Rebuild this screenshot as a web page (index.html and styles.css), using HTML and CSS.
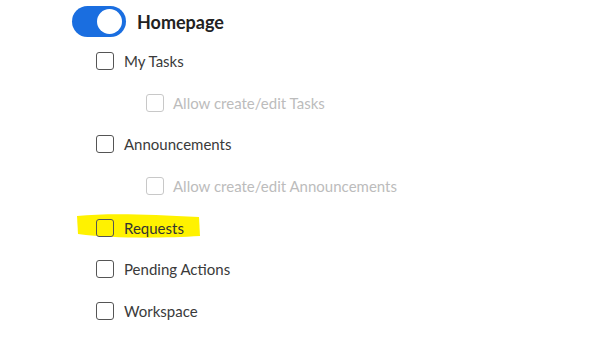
FILE: index.html
```html
<!DOCTYPE html>
<html lang="en">
  <head>
    <meta charset="UTF-8" />
    <meta name="viewport" content="width=device-width, initial-scale=1.0" />
    <title>Homepage permissions</title>
    <link rel="stylesheet" href="styles.css">
  </head>
  <body>
    <div class="panel">
      <div class="section-head">
        <span class="toggle on"><span class="knob"></span></span>
        <span class="section-title">Homepage</span>
      </div>
      <ul class="perm-list">
        <li class="perm"><span class="box"></span>My Tasks</li>
        <li class="perm sub disabled"><span class="box"></span>Allow create/edit Tasks</li>
        <li class="perm"><span class="box"></span>Announcements</li>
        <li class="perm sub disabled"><span class="box"></span>Allow create/edit Announcements</li>
        <li class="perm marked">
          <!-- highlighter stroke from the screenshot -->
          <svg class="marker" width="126" height="27" viewBox="0 0 126 27">
            <path d="M1 3 C30 0 70 1 123 4 L124 23 C90 25 40 26 2 21 Z" fill="#fff200" />
          </svg>
          <span class="box"></span>Requests
        </li>
        <li class="perm"><span class="box"></span>Pending Actions</li>
        <li class="perm"><span class="box"></span>Workspace</li>
      </ul>
    </div>
  </body>
</html>
```

FILE: styles.css
```css
body {
  margin: 0;
  background-color: #fff;
  font-family: Lato, "Liberation Sans", sans-serif;
  color: #333;
}

.panel {
  padding: 6px 0 0 72px;
}

.section-head {
  display: flex;
  align-items: center;
  height: 31px;
}

.toggle {
  width: 54px;
  height: 31px;
  border-radius: 16px;
  background-color: #1a6ee0;
  display: flex;
  align-items: center;
  justify-content: flex-end;
  padding: 0 4px;
  box-sizing: border-box;
}

.knob {
  width: 25px;
  height: 25px;
  border-radius: 50%;
  background-color: #fff;
}

.section-title {
  margin-left: 11px;
  font-size: 18px;
  font-weight: bold;
  color: #222;
}

.perm-list {
  list-style: none;
  margin: 3px 0 0 0;
  padding: 0;
}

.perm {
  position: relative;
  display: flex;
  align-items: center;
  height: 41.7px;
  padding-left: 24px;
  font-size: 15px;
  color: #3a3a3a;
}

.perm.sub {
  padding-left: 74px;
}

.perm.disabled {
  color: #bcbcbc;
}

.box {
  width: 18px;
  height: 18px;
  box-sizing: border-box;
  border: 1.5px solid #555;
  border-radius: 3px;
  margin-right: 10px;
  background-color: #fff;
}

.sub .box {
  margin-right: 9px;
}

.disabled .box {
  border-color: #c8c8c8;
}

.marked {
  z-index: 0;
  color: #333;
}

.marked .box {
  background-color: transparent;
}

.marker {
  position: absolute;
  left: 4px;
  top: 6px;
  z-index: -1;
}
```
